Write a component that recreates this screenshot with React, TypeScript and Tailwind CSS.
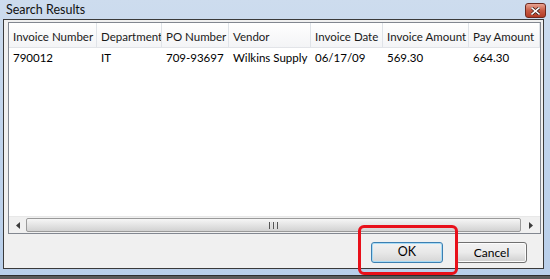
import React from "react";

const cols = [
  { label: "Invoice Number", w: 88, v: "790012" },
  { label: "Department", w: 65, v: "IT" },
  { label: "PO Number", w: 67, v: "709-93697" },
  { label: "Vendor", w: 82, v: "Wilkins Supply" },
  { label: "Invoice Date", w: 72, v: "06/17/09" },
  { label: "Invoice Amount", w: 86, v: "569.30" },
  { label: "Pay Amount", w: 71, v: "664.30" },
];

export default function App() {
  return (
    <div
      className="relative w-[550px] h-[279px] overflow-hidden bg-gradient-to-b from-[#cddcee] via-[#bfd3ec] to-[#b9cfea] text-[11.5px] text-black flex flex-col"
      style={{ fontFamily: 'Lato, "Noto Sans", sans-serif' }}
    >
      {/* title bar */}
      <div className="h-[19px] flex items-start justify-between pl-[6px] pr-[4px]">
        <span className="leading-[19px] text-[12.5px] text-[#111]">Search Results</span>
        <div className="mt-[3px] w-[21px] h-[15px] rounded-[3px] border border-[#6d2a20] bg-gradient-to-b from-[#e8a493] via-[#c75a43] to-[#b33a24] flex items-center justify-center">
          <svg width="9" height="8" viewBox="0 0 9 8">
            <path d="M1 1 L8 7 M8 1 L1 7" stroke="#3a1a14" strokeWidth="3" strokeLinecap="square" />
            <path d="M1 1 L8 7 M8 1 L1 7" stroke="#ffffff" strokeWidth="1.6" strokeLinecap="square" />
          </svg>
        </div>
      </div>

      {/* client area */}
      <div className="ml-[3px] w-[541px] h-[250px] border border-[#3a3a3a] bg-[#f0f0f0] flex flex-col pl-[4px] pt-[2px] pr-[2px]">
        <div className="h-[212px] border border-[#828790] bg-white flex flex-col">
          {/* header */}
          <div className="h-[25px] flex bg-gradient-to-b from-white to-[#f3f4f6] border-b border-[#e2e4e8]">
            {cols.map((c) => (
              <div
                key={c.label}
                style={{ width: c.w }}
                className="shrink-0 border-r border-[#dfe3e8] pl-[4px] pt-[4px] flex items-center text-[#1a1a1a] whitespace-nowrap overflow-hidden"
              >
                {c.label}
              </div>
            ))}
            <div className="flex-1" />
          </div>
          {/* row */}
          <div className="h-[18px] flex pt-[2px]">
            {cols.map((c) => (
              <div
                key={c.label}
                style={{ width: c.w }}
                className="shrink-0 pl-[4px] flex items-center whitespace-nowrap overflow-hidden"
              >
                {c.v}
              </div>
            ))}
          </div>
          <div className="flex-1" />
          {/* horizontal scrollbar */}
          <div className="h-[17px] flex bg-[#f0f0f0] border-t border-[#e8e8e8]">
            <div className="w-[17px] flex items-center justify-center">
              <svg width="4" height="7" viewBox="0 0 4 7">
                <path d="M4 0 L0 3.5 L4 7 Z" fill="#3c3c3c" />
              </svg>
            </div>
            <div className="flex-1 my-[1px] rounded-[2px] border border-[#9a9a9a] bg-gradient-to-b from-[#f6f6f6] via-[#e4e4e4] to-[#d2d2d2] flex items-center justify-center">
              <div className="flex gap-[1px] ml-[-1px]">
                <div className="w-[1px] h-[7px] bg-[#555]" />
                <div className="w-[1px] h-[7px] bg-[#dcdcdc]" />
                <div className="w-[1px] h-[7px] bg-[#555]" />
                <div className="w-[1px] h-[7px] bg-[#dcdcdc]" />
                <div className="w-[1px] h-[7px] bg-[#555]" />
              </div>
            </div>
            <div className="w-[19px] flex items-center justify-center">
              <svg width="4" height="7" viewBox="0 0 4 7">
                <path d="M0 0 L4 3.5 L0 7 Z" fill="#3c3c3c" />
              </svg>
            </div>
          </div>
        </div>

        {/* buttons */}
        <div className="flex justify-end gap-[13px] mt-[8px] pr-[14px]">
          <button className="w-[72px] h-[21px] rounded-[3px] border border-[#3c7fb1] bg-gradient-to-b from-[#f2f2f2] via-[#e8e8e8] to-[#d6d6d6] shadow-[inset_0_0_0_1px_#a8dbf5] text-[12.5px] leading-none text-black">
            OK
          </button>
          <button className="w-[71px] h-[21px] rounded-[3px] border border-[#707070] bg-gradient-to-b from-[#f2f2f2] via-[#ebebeb] to-[#cfcfcf] shadow-[inset_0_0_0_1px_#fcfcfc] text-[12px] leading-none text-black">
            Cancel
          </button>
        </div>
      </div>

      <div className="mt-[6px] h-[1px] bg-[#2e2e2e]" />
      <div className="flex-1 bg-[#5a5a5a]" />

      {/* red highlight */}
      <div className="absolute left-[358px] top-[225px] w-[100px] h-[50px] rounded-[6px] border-[3px] border-[#e8101a]" />
    </div>
  );
}
